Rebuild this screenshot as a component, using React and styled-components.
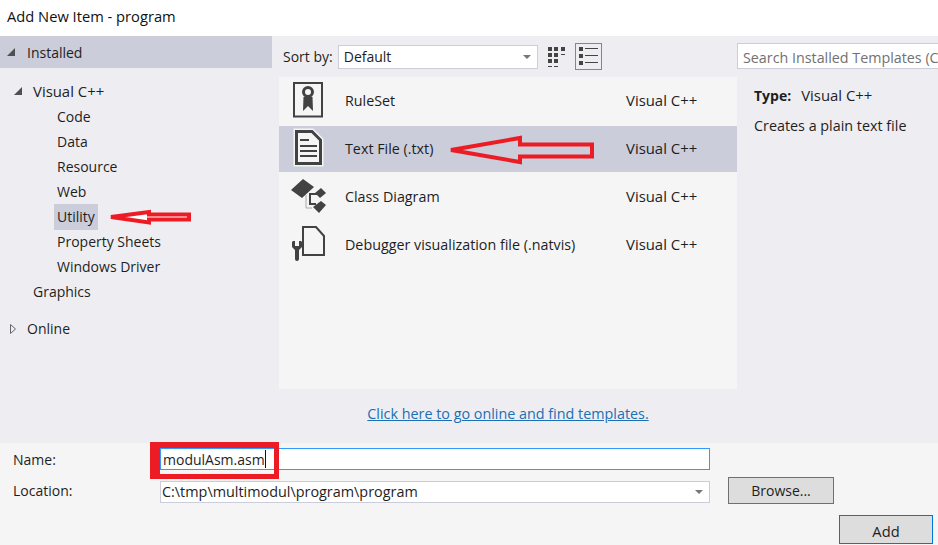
import styled, { createGlobalStyle } from 'styled-components';

const Global = createGlobalStyle`
  html, body {
    margin: 0;
    padding: 0;
    background: #eeeef2;
  }
  * {
    box-sizing: border-box;
  }
`;

const Dialog = styled.div`
  position: relative;
  width: 938px;
  height: 545px;
  overflow: hidden;
  display: flex;
  flex-direction: column;
  background: #eeeef2;
  color: #1e1e1e;
  font-family: "Open Sans", "Noto Sans", sans-serif;
  font-size: 14px;
  line-height: 20px;
`;

const TitleBar = styled.div`
  height: 36px;
  flex: none;
  padding: 6px 0 0 7px;
  background: #fff;
  color: #111;
  font-size: 14.7px;
`;

const Main = styled.div`
  flex: 1;
  display: flex;
  min-height: 0;
`;

const Side = styled.div`
  width: 279px;
  flex: none;
`;

const SideHead = styled.div`
  width: 272px;
  height: 32px;
  display: flex;
  align-items: center;
  gap: 11px;
  padding-left: 6px;
  background: #cbcdda;
`;

const SideTitle = styled.span`
  padding-top: 2px;
`;

const Tree = styled.div`
  padding-top: 11px;
`;

const Node = styled.div`
  height: 25px;
  display: flex;
  align-items: center;
  padding-left: ${(props) => props.$indent}px;
  margin-top: ${(props) => props.$gap || 0}px;
  gap: ${(props) => props.$space || 10}px;
`;

const Label = styled.span`
  padding: 3px 3px;
  margin-left: -3px;
  background: ${(props) => (props.$active ? '#cbcdda' : 'transparent')};
`;

const Lang = styled.span`
  font-size: 14.9px;
  line-height: 18px;
  margin-bottom: 2px;
`;

const ArrowSvg = styled.svg`
  flex: none;
  margin-top: ${(props) => props.$shift || 0}px;
`;

const Middle = styled.div`
  width: 458px;
  flex: none;
  display: flex;
  flex-direction: column;
`;

const Toolbar = styled.div`
  height: 41px;
  flex: none;
  display: flex;
  align-items: flex-start;
  padding: 7px 0 0 4px;
`;

const SortLabel = styled.span`
  margin: 4px 5px 0 0;
`;

const Select = styled.div`
  width: 200px;
  height: 24px;
  margin-top: 2px;
  display: flex;
  align-items: center;
  justify-content: space-between;
  padding: 0 3px 0 5px;
  background: #fff;
  border: 1px solid #cbcdda;
`;

const Caret = styled.span`
  width: 0;
  height: 0;
  margin-right: 3px;
  border-left: 4px solid transparent;
  border-right: 4px solid transparent;
  border-top: 4px solid #777;
`;

const ViewBtn = styled.div`
  width: 27px;
  height: 27px;
  margin-left: ${(props) => props.$gap}px;
  display: flex;
  align-items: center;
  justify-content: center;
  border: 1px solid ${(props) => (props.$active ? '#3399ff' : 'transparent')};
`;

const List = styled.div`
  height: 312px;
  flex: none;
  padding-top: 1px;
  background: #f5f5f5;
`;

const Row = styled.div`
  height: 46px;
  margin-bottom: 2px;
  display: flex;
  align-items: center;
  background: ${(props) => (props.$active ? '#cbcdda' : 'transparent')};
`;

const RowIcon = styled.svg`
  flex: none;
  width: 44px;
  height: 44px;
  margin: 0 16px 0 6px;
`;

const RowName = styled.span`
  width: 281px;
  flex: none;
  font-size: 14.3px;
`;

const LinkRow = styled.div`
  padding-top: 15px;
  text-align: center;
  color: #1a6fb5;
  text-decoration: underline;
  font-size: 14.35px;
`;

const Detail = styled.div`
  flex: 1;
  min-width: 0;
`;

const Search = styled.div`
  width: 220px;
  height: 26px;
  margin-top: 7px;
  padding: 4px 0 0 5px;
  background: #fff;
  border: 1px solid #cbcdda;
  color: #717171;
  font-size: 14.3px;
  white-space: nowrap;
  overflow: hidden;
`;

const TypeLine = styled.div`
  margin: 17px 0 0 17px;
  display: flex;
  align-items: center;
  gap: 10px;
`;

const Strong = styled.b`
  font-weight: 700;
`;

const Desc = styled.div`
  margin: 10px 0 0 17px;
  font-size: 14.35px;
`;

const Footer = styled.div`
  height: 102px;
  flex: none;
  padding: 5px 5px 0 13px;
  background: #f5f5f5;
  display: grid;
  grid-template-columns: 147px 550px 18px 106px 1fr;
  grid-template-rows: 22px 40px 35px;
`;

const FieldLabel = styled.div`
  grid-column: 1;
  grid-row: ${(props) => props.$row};
  margin-top: ${(props) => props.$top}px;
`;

const NameInput = styled.div`
  grid-column: 2;
  grid-row: 1;
  height: 22px;
  display: flex;
  align-items: center;
  padding: 1px 0 0 2px;
  background: #fff;
  border: 1px solid #3399ff;
`;

const Cursor = styled.span`
  width: 1px;
  height: 18px;
  margin-top: -1px;
  background: #111;
`;

const LocationInput = styled.div`
  grid-column: 2;
  grid-row: 2;
  height: 22px;
  margin-top: 11px;
  display: flex;
  align-items: center;
  justify-content: space-between;
  padding: 0 3px 0 1px;
  background: #fff;
  border: 1px solid #cbcdda;
  font-size: 14.4px;
`;

const BrowseBtn = styled.div`
  grid-column: 4;
  grid-row: 2;
  height: 27px;
  margin-top: 7px;
  display: flex;
  align-items: center;
  justify-content: center;
  background: #dddddd;
  border: 1px solid #707070;
`;

const AddBtn = styled.div`
  grid-column: 4 / 6;
  grid-row: 3;
  justify-self: end;
  width: 94px;
  height: 29px;
  margin-top: 5px;
  padding-top: 2px;
  display: flex;
  align-items: center;
  justify-content: center;
  background: #dddddd;
  border: 1px solid #0078d7;
  font-size: 14.7px;
`;

const NameBox = styled.div`
  position: absolute;
  left: 150px;
  top: 442px;
  width: 129px;
  height: 37px;
  border: solid #ed1c24;
  border-width: 6px 5px 5px 10px;
`;

const Overlay = styled.svg`
  position: absolute;
  left: 0;
  top: 0;
  pointer-events: none;
`;

const DARK = '#424242';

function TreeArrow({ open, shift }) {
  return (
    <ArrowSvg width="10" height="10" viewBox="0 0 10 10" $shift={shift}>
      {open ? (
        <path d="M9 1v8H1z" fill="#505050" />
      ) : (
        <path d="M2.5 0.5l5 4.5-5 4.5z" fill="#eeeef2" stroke="#666" />
      )}
    </ArrowSvg>
  );
}

function GridViewIcon() {
  return (
    <svg width="18" height="20" viewBox="0 0 18 20" fill="#444">
      <rect x="0" y="0" width="4" height="4" />
      <rect x="6" y="0" width="4" height="4" />
      <rect x="13" y="0" width="4" height="4" />
      <rect x="0" y="6" width="4" height="4" />
      <rect x="6" y="6" width="4" height="4" />
      <rect x="13" y="7" width="4" height="1" />
      <rect x="0" y="12" width="4" height="4" />
      <rect x="6" y="12" width="4" height="4" />
      <rect x="0" y="19" width="4" height="1" />
      <rect x="6" y="19" width="4" height="1" />
    </svg>
  );
}

function ListViewIcon() {
  return (
    <svg width="19" height="19" viewBox="0 0 19 19" fill="#444">
      <rect x="0" y="0" width="4" height="4" />
      <rect x="6" y="1" width="13" height="1" />
      <rect x="0" y="7" width="4" height="4" />
      <rect x="6" y="8" width="13" height="1" />
      <rect x="0" y="14" width="4" height="4" />
      <rect x="6" y="15" width="13" height="1" />
    </svg>
  );
}

function RuleSetIcon() {
  return (
    <RowIcon viewBox="0 0 44 44">
      <rect x="9" y="4" width="28" height="33.5" fill="#f5f5f5" stroke={DARK} strokeWidth="2" />
      <circle cx="23" cy="13" r="4.5" fill="none" stroke={DARK} strokeWidth="3" />
      <path d="M18.5 18L18 32l5-5 5 5-.5-14z" fill={DARK} />
    </RowIcon>
  );
}

function TextFileIcon() {
  return (
    <RowIcon viewBox="0 0 44 44">
      <path d="M11.5 4.5H27l8.5 8.5v23.5h-24z" fill="#f5f5f5" stroke="#f5f5f5" strokeWidth="6" />
      <path d="M11.5 4.5H27l8.5 8.5v23.5h-24z" fill="#f5f5f5" stroke={DARK} strokeWidth="3" />
      <path d="M15 13h9M15 19h17M15 24h17M15 29h17" stroke={DARK} strokeWidth="2" />
    </RowIcon>
  );
}

function ClassDiagramIcon() {
  return (
    <RowIcon viewBox="0 0 44 44">
      <path d="M21 20v13h6" fill="none" stroke="#aaa" strokeWidth="1" />
      <path d="M32 19H25v10h6" fill="none" stroke={DARK} strokeWidth="2" />
      <path d="M6 15L18 4l11 8-12 11z" fill={DARK} />
      <path d="M30 18l6-5 5 5-6 5z" fill={DARK} />
      <path d="M28 32l8-6 5 4-7 8z" fill={DARK} />
    </RowIcon>
  );
}

function DebuggerIcon() {
  return (
    <RowIcon viewBox="0 0 44 44">
      <path d="M18 4h13l8 9v19H18z" fill="#f5f5f5" stroke={DARK} strokeWidth="2" />
      <path d="M8 18h2v5h4v-5h2l1 1v5l-3 3v9a2 2 0 0 1-4 0v-9l-3-3v-5z" fill={DARK} />
    </RowIcon>
  );
}

function App() {
  return (
    <>
      <Global />
      <Dialog>
        <TitleBar>Add New Item - program</TitleBar>
        <Main>
          <Side>
            <SideHead>
              <TreeArrow open />
              <SideTitle>Installed</SideTitle>
            </SideHead>
            <Tree>
              <Node $indent={13}>
                <TreeArrow open shift={-2} />
                <Lang>Visual C++</Lang>
              </Node>
              {['Code', 'Data', 'Resource', 'Web'].map((name) => (
                <Node key={name} $indent={57}>
                  <Label>{name}</Label>
                </Node>
              ))}
              <Node $indent={57}>
                <Label $active>Utility</Label>
              </Node>
              {['Property Sheets', 'Windows Driver'].map((name) => (
                <Node key={name} $indent={57}>
                  <Label>{name}</Label>
                </Node>
              ))}
              <Node $indent={33}>Graphics</Node>
              <Node $indent={8} $gap={12} $space={9}>
                <TreeArrow />
                Online
              </Node>
            </Tree>
          </Side>
          <Middle>
            <Toolbar>
              <SortLabel>Sort by:</SortLabel>
              <Select>
                Default
                <Caret />
              </Select>
              <ViewBtn $gap={6}>
                <GridViewIcon />
              </ViewBtn>
              <ViewBtn $gap={4} $active>
                <ListViewIcon />
              </ViewBtn>
            </Toolbar>
            <List>
              <Row>
                <RuleSetIcon />
                <RowName>RuleSet</RowName>
                <Lang>Visual C++</Lang>
              </Row>
              <Row $active>
                <TextFileIcon />
                <RowName>Text File (.txt)</RowName>
                <Lang>Visual C++</Lang>
              </Row>
              <Row>
                <ClassDiagramIcon />
                <RowName>Class Diagram</RowName>
                <Lang>Visual C++</Lang>
              </Row>
              <Row>
                <DebuggerIcon />
                <RowName>Debugger visualization file (.natvis)</RowName>
                <Lang>Visual C++</Lang>
              </Row>
            </List>
            <LinkRow>Click here to go online and find templates.</LinkRow>
          </Middle>
          <Detail>
            <Search>Search Installed Templates (Ctrl+E)</Search>
            <TypeLine>
              <Strong>Type:</Strong>
              <Lang>Visual C++</Lang>
            </TypeLine>
            <Desc>Creates a plain text file</Desc>
          </Detail>
        </Main>
        <Footer>
          <FieldLabel $row={1} $top={2}>Name:</FieldLabel>
          <NameInput>
            modulAsm.asm
            <Cursor />
          </NameInput>
          <FieldLabel $row={2} $top={11}>Location:</FieldLabel>
          <LocationInput>
            C:\tmp\multimodul\program\program
            <Caret />
          </LocationInput>
          <BrowseBtn>Browse...</BrowseBtn>
          <AddBtn>Add</AddBtn>
        </Footer>
        <NameBox />
        <Overlay width="938" height="545" viewBox="0 0 938 545">
          <path
            d="M451 150L520 138V144.5H592V156.5H520V162Z"
            fill="none"
            stroke="#ed1c24"
            strokeWidth="4"
          />
          <path
            d="M111 217L149 212V214.5H189V219.5H149V222.5Z"
            fill="#fff"
            stroke="#ed1c24"
            strokeWidth="4"
          />
        </Overlay>
      </Dialog>
    </>
  );
}

export default App;
